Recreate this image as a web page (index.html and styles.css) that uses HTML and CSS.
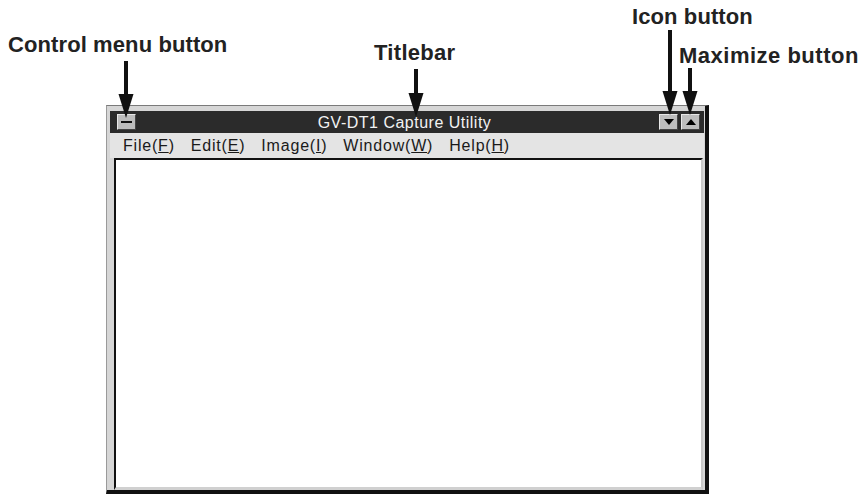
FILE: index.html
```html
<!DOCTYPE html>
<html>
<head>
<meta charset="utf-8">
<link rel="stylesheet" href="styles.css">
</head>
<body>
<div class="canvas">
  <div class="window">
    <div class="titlebar">
      <div class="btn ctrl"><span class="dash"></span></div>
      <div class="title">GV-DT1 Capture Utility</div>
      <div class="btns">
        <div class="btn sz"><svg width="10" height="6" viewBox="0 0 10 6"><polygon points="0,0 10,0 5,6" fill="#000"/></svg></div>
        <div class="btn sz"><svg width="10" height="6" viewBox="0 0 10 6"><polygon points="0,6 10,6 5,0" fill="#000"/></svg></div>
      </div>
    </div>
    <div class="menubar">
      <span class="mi">File(<u>F</u>)</span>
      <span class="mi">Edit(<u>E</u>)</span>
      <span class="mi">Image(<u>I</u>)</span>
      <span class="mi">Window(<u>W</u>)</span>
      <span class="mi">Help(<u>H</u>)</span>
    </div>
    <div class="client"></div>
  </div>

  <div class="label l-ctrl">Control menu button</div>
  <div class="label l-title">Titlebar</div>
  <div class="label l-icon">Icon button</div>
  <div class="label l-max">Maximize button</div>

  <svg class="arrow a-ctrl" width="16" height="57" viewBox="0 0 16 57"><rect x="6" y="0" width="4" height="35" fill="#111"/><polygon points="0.5,33 15.5,33 8,57" fill="#111"/></svg>
  <svg class="arrow a-title" width="16" height="48" viewBox="0 0 16 48"><rect x="6" y="0" width="4" height="26" fill="#111"/><polygon points="0.5,24 15.5,24 8,48" fill="#111"/></svg>
  <svg class="arrow a-icon" width="16" height="85" viewBox="0 0 16 85"><rect x="6" y="0" width="4" height="63" fill="#111"/><polygon points="0.5,61 15.5,61 8,85" fill="#111"/></svg>
  <svg class="arrow a-max" width="16" height="47" viewBox="0 0 16 47"><rect x="6" y="0" width="4" height="25" fill="#111"/><polygon points="0.5,23 15.5,23 8,47" fill="#111"/></svg>
</div>
</body>
</html>
```

FILE: styles.css
```css
html, body {
  margin: 0;
  padding: 0;
  background: #fff;
}
.canvas {
  position: relative;
  width: 861px;
  height: 498px;
  overflow: hidden;
  font-family: "Liberation Sans", Arial, sans-serif;
}
.window {
  margin-left: 106px;
  margin-top: 105px;
  width: 603px;
  height: 389px;
  border-top: 1px solid #7a7a7a;
  border-left: 1px solid #9a9a9a;
  border-right: 4px solid #111;
  border-bottom: 4px solid #111;
  background: #d6d6d6;
  padding: 5px 1px 0 3px;
  box-sizing: border-box;
  display: flex;
  flex-direction: column;
}
.titlebar {
  height: 22px;
  background: #2b2b2b;
  display: flex;
  align-items: center;
  padding: 0 4px 0 7px;
  flex: none;
}
.btn {
  width: 17px;
  height: 14px;
  background: #bdbdbd;
  border: 1px solid #e8e8e8;
  border-right-color: #444;
  border-bottom-color: #444;
  display: flex;
  align-items: center;
  justify-content: center;
  flex: none;
}
.dash {
  width: 11px;
  height: 2px;
  background: #111;
}
.title {
  flex: 1;
  text-align: center;
  color: #f2f2f2;
  font-size: 16px;
  letter-spacing: 0.5px;
  padding-left: 14px;
  padding-top: 2px;
}
.btns {
  display: flex;
  gap: 3px;
}
.menubar {
  height: 25px;
  background: #e4e4e4;
  display: flex;
  align-items: center;
  padding-left: 13px;
  gap: 16px;
  font-size: 16px;
  color: #1a1a1a;
  letter-spacing: 0.8px;
  flex: none;
}
.client {
  flex: 1;
  background: #fff;
  border-top: 2px solid #111;
  border-left: 2px solid #111;
  border-right: 2px solid #c8c8c8;
  border-bottom: 3px solid #d0d0d0;
  margin: 0 1px 0 4px;
}
.label {
  position: absolute;
  font-weight: bold;
  font-size: 22px;
  letter-spacing: 0.3px;
  color: #222;
  white-space: nowrap;
}
.l-ctrl { left: 8px; top: 32px; letter-spacing: 0.1px; }
.l-title { left: 374px; top: 40px; }
.l-icon { left: 632px; top: 4px; letter-spacing: 0.1px; }
.l-max { left: 679px; top: 43px; letter-spacing: 0.5px; }
.arrow { position: absolute; }
.a-ctrl { left: 118px; top: 61px; }
.a-title { left: 408px; top: 69px; }
.a-icon { left: 662px; top: 30px; }
.a-max { left: 682px; top: 68px; }
```
